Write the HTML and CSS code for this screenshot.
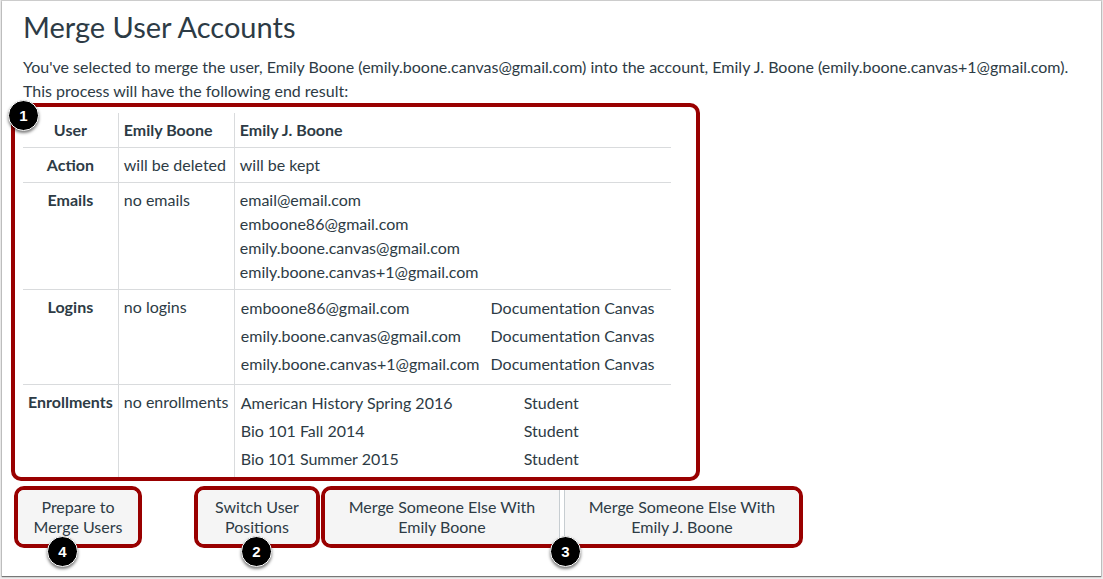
FILE: index.html
```html
<!DOCTYPE html>
<html lang="en">
<head>
  <meta charset="utf-8" />
	<title>Merge User Accounts</title>
	<link rel="stylesheet" href="styles.css">
</head>
<body>

<main class="page">
	<h1 class="title">Merge User Accounts</h1>
	<p class="intro">You've selected to merge the user, Emily Boone (emily.boone.canvas@gmail.com) into the account, Emily J. Boone (emily.boone.canvas+1@gmail.com). This process will have the following end result:</p>

	<!-- end result -->
	<section class="frame result">
		<span class="badge badge-corner">1</span>
		<table class="merge-table">
			<tr>
				<th scope="row">User</th>
				<th class="name" scope="col">Emily Boone</th>
				<th class="name" scope="col">Emily J. Boone</th>
			</tr>
			<tr>
				<th scope="row">Action</th>
				<td>will be deleted</td>
				<td>will be kept</td>
			</tr>
			<tr>
				<th scope="row">Emails</th>
				<td>no emails</td>
				<td>
					<ul class="emails">
						<li>email@email.com</li>
						<li>emboone86@gmail.com</li>
						<li>emily.boone.canvas@gmail.com</li>
						<li>emily.boone.canvas+1@gmail.com</li>
					</ul>
				</td>
			</tr>
			<tr>
				<th scope="row">Logins</th>
				<td>no logins</td>
				<td>
					<table class="list">
						<tr><td>emboone86@gmail.com</td><td>Documentation Canvas</td></tr>
						<tr><td>emily.boone.canvas@gmail.com</td><td>Documentation Canvas</td></tr>
						<tr><td>emily.boone.canvas+1@gmail.com</td><td>Documentation Canvas</td></tr>
					</table>
				</td>
			</tr>
			<tr>
				<th scope="row">Enrollments</th>
				<td>no enrollments</td>
				<td>
					<table class="list courses">
						<tr><td>American History Spring 2016</td><td>Student</td></tr>
						<tr><td>Bio 101 Fall 2014</td><td>Student</td></tr>
						<tr><td>Bio 101 Summer 2015</td><td>Student</td></tr>
					</table>
				</td>
			</tr>
		</table>
	</section>

	<!-- buttons -->
	<div class="actions">
		<div class="frame prepare">
			<button type="button" class="btn">Prepare to<br>Merge Users</button>
			<span class="badge">4</span>
		</div>
		<div class="frame switch">
			<button type="button" class="btn">Switch User<br>Positions</button>
			<span class="badge">2</span>
		</div>
		<div class="frame others">
			<button type="button" class="btn">Merge Someone Else With<br>Emily Boone</button>
			<button type="button" class="btn">Merge Someone Else With<br>Emily J. Boone</button>
			<span class="badge">3</span>
		</div>
	</div>
</main>

</body>
</html>
```
FILE: styles.css
```css
*{
	margin:0;
	padding:0;
	box-sizing: border-box;
}
body{
	padding:1px 2px 3px;
	background: #ededed;
	color:#2d3b45;
	font:16px/24px Lato, "Liberation Sans", sans-serif;
}
.page{
	min-height: calc(100vh - 4px);
	padding-top:6px;
	background: #fff;
	box-shadow: 0 1px 1px #777, 0 0 1px 1px #ccc;
}
.title{
	padding:0 21px;
	font-size:29px;
	font-weight: normal;
	line-height: 40px;
}
.intro{
	padding:8px 21px 0;
}

/* red outlined areas */
.frame{
	position: relative;
	border:4px solid #900;
	border-radius: 10px;
}
.badge{
	position: absolute;
	left:50%;
	bottom:-23px;
	width:31px;
	height: 31px;
	margin-left:-16px;
	border:1px solid #fff;
	border-radius: 50%;
	background: #000;
	box-shadow: 0 2px 3px rgba(0,0,0,.5);
	color:#fff;
	font:bold 15px/30px "Liberation Sans", sans-serif;
	text-align: center;
}
.badge-corner{
	top:-7px;
	left:-7px;
	bottom:auto;
	margin:0;
}

/* table */
.result{
	width:689px;
	max-width: calc(100% - 18px);
	margin:0 0 0 9px;
	padding:6px 25px 0 8px;
}
.merge-table{
	width:100%;
	border-spacing: 0;
}
.merge-table th,
.merge-table td{
	padding:5px;
	border-right:1px solid #d9dbdd;
	border-bottom:1px solid #d9dbdd;
	text-align: left;
	vertical-align: top;
}
.merge-table th{
	width:1px;
	text-align: center;
}
.merge-table .name{
	width:auto;
	text-align: left;
}
.merge-table .name:nth-child(2){
	width:116px;
	white-space: nowrap;
}
.merge-table td:nth-child(2){
	white-space: nowrap;
}
.merge-table > tbody > tr > :last-child{
	border-right:none;
}
.merge-table > tbody > tr:last-child > *{
	padding-bottom:3px;
	border-bottom:none;
}
.emails{
	list-style: none;
}
.merge-table .list{
	border-spacing: 0;
}
.merge-table .list td{
	padding:1px 10px 3px 1px;
	border:none;
}
.merge-table .courses td:first-child{
	width:283px;
}

/* buttons */
.actions{
	display: flex;
	margin:5px 12px 0;
}
.btn{
	flex:1;
	padding:7px 15px;
	border:none;
	background: #f5f5f5;
	color:#2d3b45;
	font:16px/20px Lato, "Liberation Sans", sans-serif;
	cursor: pointer;
}
.prepare,
.switch,
.others{
	display: flex;
}
.prepare .btn,
.switch .btn{
	border-radius: 6px;
}
.prepare{
	width:128px;
	margin-right:52px;
}
.prepare .badge{
	left:45px;
}
.switch{
	width:126px;
	margin-right:1px;
}
.others{
	width:482px;
	gap:4px;
}
.others .badge{
	left:241px;
}
.others .btn:first-child{
	border-right:1px solid #c7cdd1;
	border-radius: 6px 0 0 6px;
}
.others .btn:nth-child(2){
	border-left:1px solid #c7cdd1;
	border-radius: 0 6px 6px 0;
}
```
